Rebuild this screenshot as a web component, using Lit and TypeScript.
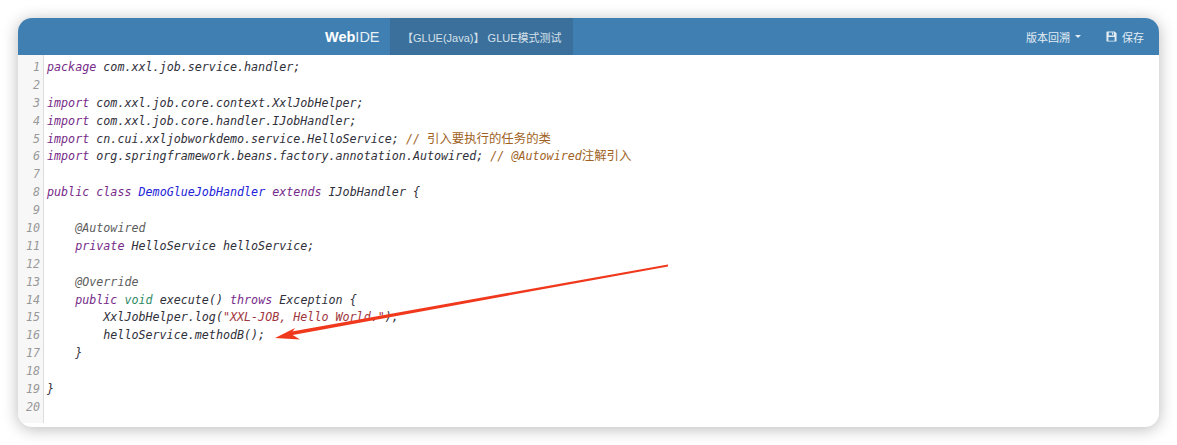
import { LitElement, html, css } from "lit";
import { customElement } from "lit/decorators.js";

type Tok = [string, string?];
const K = "k", T = "t", D = "d", C = "c", S = "s", M = "m", Z = "c z";
const lines: Tok[][] = [
  [["package", K], [" com.xxl.job.service.handler;"]],
  [],
  [["import", K], [" com.xxl.job.core.context.XxlJobHelper;"]],
  [["import", K], [" com.xxl.job.core.handler.IJobHandler;"]],
  [["import", K], [" cn.cui.xxljobworkdemo.service.HelloService; "], ["// ", C], ["引入要执行的任务的类", Z]],
  [["import", K], [" org.springframework.beans.factory.annotation.Autowired; "], ["// @Autowired", C], ["注解引入", Z]],
  [],
  [["public", K], [" "], ["class", K], [" "], ["DemoGlueJobHandler", D], [" "], ["extends", K], [" IJobHandler {"]],
  [],
  [["    "], ["@Autowired", M]],
  [["    "], ["private", K], [" HelloService helloService;"]],
  [],
  [["    "], ["@Override", M]],
  [["    "], ["public", K], [" "], ["void", T], [" execute() "], ["throws", K], [" Exception {"]],
  [["        XxlJobHelper.log("], ['"XXL-JOB, Hello World."', S], [");"]],
  [["        helloService.methodB();"]],
  [["    }"]],
  [],
  [["}"]],
  [],
];

@customElement("app-root")
export class AppRoot extends LitElement {
  static styles = css`
    :host {
      display: block;
      width: 1177px;
      height: 445px;
      box-sizing: border-box;
      padding: 18px;
      background: #fff;
      position: relative;
      overflow: hidden;
    }
    .card {
      height: 409px;
      border-radius: 14px;
      overflow: hidden;
      background: #fff;
      box-shadow: 0 2px 16px rgba(0, 0, 0, 0.28);
      display: flex;
      flex-direction: column;
    }
    .bar {
      height: 37px;
      flex: none;
      background: #3f7fb1;
      display: flex;
      align-items: center;
      font-family: "Liberation Sans", "Noto Sans CJK SC", sans-serif;
      color: #e4edf4;
      font-size: 11px;
    }
    .brand {
      margin-left: 307px;
      width: 65px;
      font-size: 14.5px;
      color: #fff;
    }
    .brand b { font-weight: 700; }
    .brand span { color: #e6eff6; }
    .tab {
      align-self: stretch;
      width: 183px;
      box-sizing: border-box;
      padding-left: 12px;
      background: #3b6f9c;
      display: flex;
      align-items: center;
      color: #d5e1ea;
      white-space: pre;
    }
    .nav {
      margin-left: auto;
      display: flex;
      align-items: center;
      padding-right: 15px;
      font-size: 11px;
    }
    .caret {
      width: 0;
      height: 0;
      margin-left: 5px;
      border-top: 3px solid #e4edf4;
      border-left: 3px solid transparent;
      border-right: 3px solid transparent;
    }
    .save {
      margin-left: 25px;
      display: flex;
      align-items: center;
      gap: 5px;
    }
    .save svg { width: 11px; height: 11px; display: block; }
    .editor {
      height: 368px;
      flex: none;
      display: flex;
      font-family: "DejaVu Sans Mono", "Noto Sans CJK SC", monospace;
      font-size: 11.7px;
      font-style: italic;
      color: #30303a;
    }
    .gutter {
      flex: none;
      box-sizing: border-box;
      padding: 4px 3px 0 0;
      background: #f7f7f7;
      border-right: 1px solid #ddd;
      width: 26px;
      color: #999;
      text-align: right;
    }
    .code { padding: 4px 0 0 3px; flex: 1; min-width: 0; }
    .ln, .row { height: 17.9px; line-height: 17.9px; white-space: pre; }
    .k { color: #762a88; }
    .t { color: #2f8a66; }
    .d { color: #2222d8; }
    .c { color: #a0621e; }
    .z { font-style: normal; font-size: 12.4px; line-height: 0; }
    .s { color: #a03640; }
    .m { color: #5c5c5c; }
    .arrow {
      position: absolute;
      left: 0;
      top: 0;
      width: 1177px;
      height: 445px;
      pointer-events: none;
    }
  `;

  render() {
    return html`
      <div class="card">
        <div class="bar">
          <div class="brand"><b>Web</b><span>IDE</span></div>
          <div class="tab">【GLUE(Java)】 GLUE模式测试</div>
          <div class="nav">
            <span>版本回溯</span><span class="caret"></span>
            <span class="save">
              <svg viewBox="0 0 12 12" fill="none">
                <path fill-rule="evenodd" fill="#e4edf4" d="M1 0.5h8.5l2 2v8.5a.5.5 0 0 1-.5.5H1a.5.5 0 0 1-.5-.5V1a.5.5 0 0 1 .5-.5zM3 1.6v3.2h5.6V1.6zM2.6 6.6v3.9h6.8V6.6zM6.6 2h1.2v2.2H6.6z"/>
              </svg>
              <span>保存</span>
            </span>
          </div>
        </div>
        <div class="editor">
          <div class="gutter">${lines.map((_, i) => html`<div class="ln">${i + 1}</div>`)}</div>
          <div class="code">
            ${lines.map(
              (l) => html`<div class="row">${l.map(([t, c]) => (c ? html`<span class=${c}>${t}</span>` : t))}</div>`
            )}
          </div>
        </div>
      </div>
      <svg class="arrow" viewBox="0 0 1177 445">
        <path d="M668 264.4 L289 332 L290 335.4 L668 266.4 Z" fill="#f0381c"/>
        <path d="M275 338 L295 328 L291 334 L300 339.5 Z" fill="#f0381c"/>
      </svg>
    `;
  }
}
